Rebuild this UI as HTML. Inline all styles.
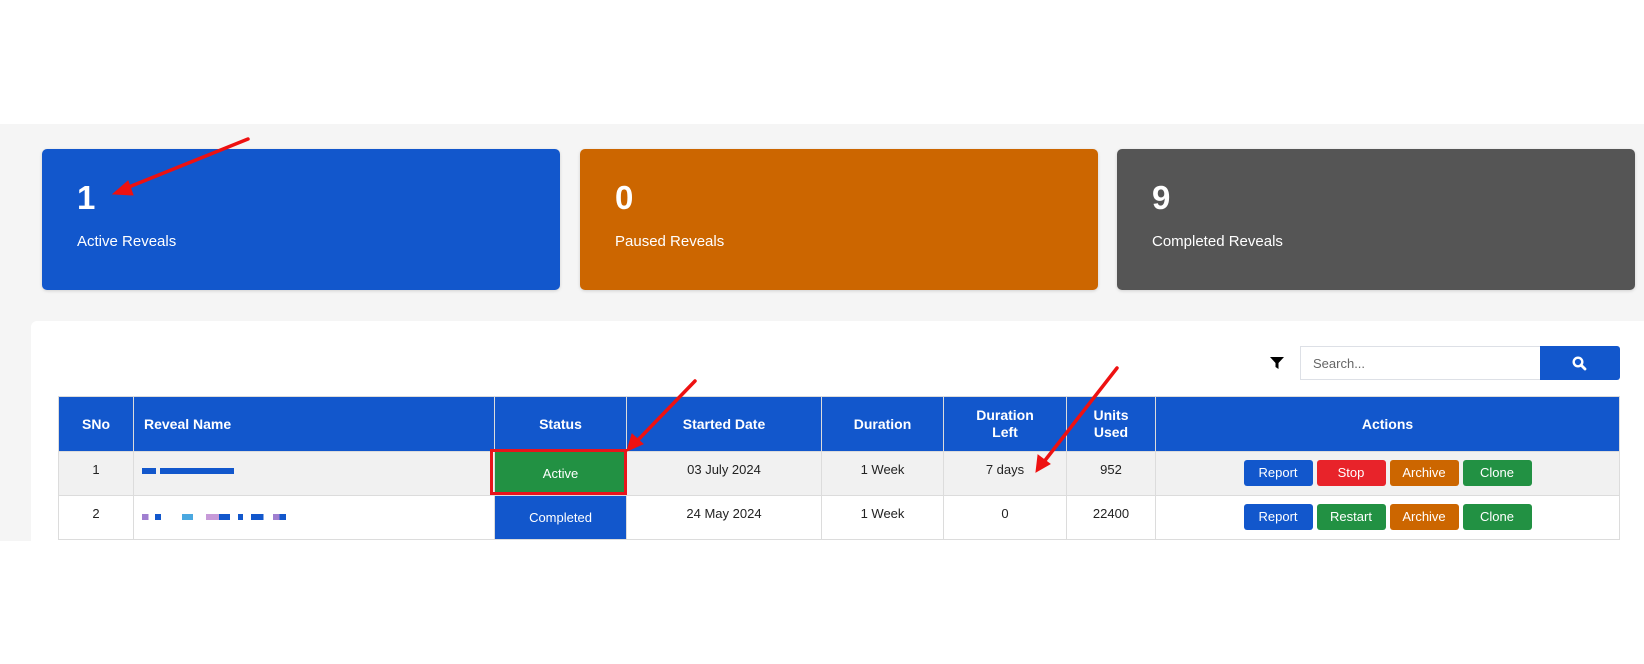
<!DOCTYPE html>
<html><head><style>
*{box-sizing:border-box;margin:0;padding:0}
body{width:1644px;height:664px;background:#fff;font-family:"Liberation Sans",Arial,sans-serif;position:relative;overflow:hidden}
.abs{position:absolute}
.gray{left:0;top:124px;width:1644px;height:417px;background:#f5f5f5}
.card{top:149px;height:141px;width:518px;border-radius:5px;color:#fff;box-shadow:0 1px 3px rgba(0,0,0,.15)}
.card .n{position:absolute;left:35px;top:30px;font-size:33px;font-weight:bold}
.card .l{position:absolute;left:35px;top:84px;font-size:15px}
.panel{left:31px;top:321px;width:1620px;height:230px;background:#fff;border-radius:6px}
table{position:absolute;left:58px;top:396px;width:1562px;border-collapse:collapse;font-size:13px;color:#222}
th{background:#1257cc;color:#fff;font-weight:bold;font-size:14px;height:55px;border:1px solid #dcdcdc;text-align:center;line-height:17px}
td{border:1px solid #dcdcdc;text-align:center;height:44px;vertical-align:top;padding-top:10px}
tr.r1 td{background:#f1f1f1}
.b{display:inline-block;width:69px;height:26px;line-height:26px;color:#fff;font-size:13px;border-radius:3px;margin:0 2px}
.blue{background:#1257cc}.red{background:#e8232a}.org{background:#cc6600}.grn{background:#229143}
.px{display:inline-block;height:6px}
</style></head><body>
<div class="abs gray"></div>
<div class="abs card" style="left:42px;background:#1257cc"><div class="n">1</div><div class="l">Active Reveals</div></div>
<div class="abs card" style="left:580px;background:#cc6600"><div class="n">0</div><div class="l">Paused Reveals</div></div>
<div class="abs card" style="left:1117px;background:#555"><div class="n">9</div><div class="l">Completed Reveals</div></div>
<div class="abs panel"></div>
<svg class="abs" style="left:1269px;top:355px" width="16" height="16" viewBox="0 0 16 16"><path d="M1 2h14l-5.5 6v6l-3 -2v-4z" fill="#000"/></svg>
<div class="abs" style="left:1300px;top:346px;width:241px;height:34px;border:1px solid #dde0e6;border-right:none;background:#fff;font-size:13px;color:#666;padding:9px 12px">Search...</div>
<div class="abs" style="left:1540px;top:346px;width:80px;height:34px;background:#1257cc;border-radius:0 3px 3px 0"><svg style="position:absolute;left:32px;top:10px" width="15" height="15" viewBox="0 0 15 15"><circle cx="6" cy="6" r="4.3" stroke="#fff" stroke-width="2.4" fill="none"/><path d="M9 9l4 4" stroke="#fff" stroke-width="2.8" stroke-linecap="round"/></svg></div>
<table>
<tr><th style="width:75px">SNo</th><th style="width:361px;text-align:left;padding-left:10px">Reveal Name</th><th style="width:132px">Status</th><th style="width:195px">Started Date</th><th style="width:122px">Duration</th><th style="width:123px">Duration<br>Left</th><th style="width:89px">Units<br>Used</th><th>Actions</th></tr>
<tr class="r1"><td>1</td><td style="text-align:left;padding:10px 0 0 8px"><span class="px" style="width:14px;background:#1257cc;margin-top:6px"></span> <span class="px" style="width:74px;background:#1257cc"></span></td><td style="background:#229143;color:#fff;padding-top:14px">Active</td><td>03 July 2024</td><td>1 Week</td><td>7 days</td><td>952</td><td style="padding-top:8px"><span class="b blue">Report</span><span class="b red">Stop</span><span class="b org">Archive</span><span class="b grn">Clone</span></td></tr>
<tr><td>2</td><td style="text-align:left;padding:12px 0 0 8px"><span class="px" style="width:160px;background:linear-gradient(90deg,#a07fd0 0 4%,#fff 4% 8%,#1257cc 8% 12%,#fff 12% 25%,#4aa8e0 25% 32%,#fff 32% 40%,#c79ad8 40% 48%,#1257cc 48% 55%,#fff 55% 60%,#1257cc 60% 63%,#fff 63% 68%,#1257cc 68% 76%,#fff 76% 82%,#a07fd0 82% 86%,#1257cc 86% 90%,#fff 90%)"></span></td><td style="background:#1257cc;color:#fff;padding-top:14px">Completed</td><td>24 May 2024</td><td>1 Week</td><td>0</td><td>22400</td><td style="padding-top:8px"><span class="b blue">Report</span><span class="b grn">Restart</span><span class="b org">Archive</span><span class="b grn">Clone</span></td></tr>
</table>
<div class="abs" style="left:0;top:541px;width:1644px;height:123px;background:#fff"></div>
<div class="abs" style="left:490px;top:449px;width:137px;height:46px;border:3px solid #e8141b"></div>
<svg class="abs" style="left:0;top:0" width="1644" height="664">
<g stroke="#ee1111" stroke-width="3.5" fill="#ee1111" stroke-linecap="round">
<line x1="248" y1="139" x2="124" y2="189"/><polygon points="113,194 128,181 133,195" stroke-width="1"/>
<line x1="695" y1="381" x2="636" y2="442"/><polygon points="627,451 632,434 643,444" stroke-width="1"/>
<line x1="1117" y1="368" x2="1043" y2="463"/><polygon points="1036,472 1038,455 1050,464" stroke-width="1"/>
</g></svg>
</body></html>
